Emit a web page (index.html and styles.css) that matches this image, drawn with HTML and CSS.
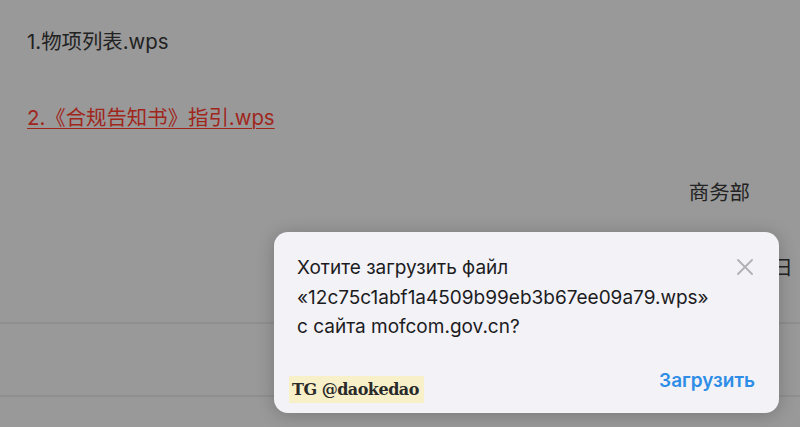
FILE: index.html
```html
<!DOCTYPE html>
<html lang="zh">
<head>
  <meta charset="UTF-8">
  <title>商务部</title>
  <meta name="viewport" content="width=device-width, initial-scale=1">
  <link rel="stylesheet" href="styles.css">
</head>
<body>
  <div class="page">
    <p class="file">1.物项列表.wps</p>
    <p class="file"><a href="#" class="link">2.《合规告知书》指引.wps</a></p>
    <p class="sign">商务部</p>
    <p class="date">日</p>
    <div class="rule first"></div>
    <div class="rule second"></div>
  </div>

  <div class="dialog">
    <div class="dialog-text">
      Хотите загрузить файл<br>
      «12c75c1abf1a4509b99eb3b67ee09a79.wps»<br>
      с сайта mofcom.gov.cn?
    </div>
    <svg class="close" width="16" height="16" viewBox="0 0 16 16">
      <path d="M1 1 L15 15 M15 1 L1 15" stroke="#b0b0b5" stroke-width="1.8" stroke-linecap="round"/>
    </svg>
    <div class="dialog-foot">
      <span class="mark">TG @daokedao</span>
      <a href="#" class="download">Загрузить</a>
    </div>
  </div>
</body>
</html>
```

FILE: styles.css
```css
body {
  margin: 0;
  background: #999999;
  font-family: "Inter", "Noto Sans CJK SC", sans-serif;
  color: #222;
  overflow: hidden;
}

.page {
  height: 427px;
  padding: 0 27px;
  position: relative;
}

.file {
  margin: 0;
  font-size: 20.4px;
  line-height: 26px;
}

.file:first-child {
  padding-top: 29px;
}

.file + .file {
  margin-top: 50px;
}

.link {
  color: #a0261c;
  text-decoration: underline;
  text-decoration-thickness: 1px;
  text-underline-offset: 3px;
}

.sign {
  margin: 49px 23px 0 0;
  font-size: 20.4px;
  line-height: 26px;
  text-align: right;
}

.date {
  margin: 49px -20px 0 0;
  font-size: 20.4px;
  line-height: 26px;
  text-align: right;
}

.rule {
  height: 2px;
  background: #8f8f8f;
  margin: 0 -27px;
}

.rule.first {
  margin-top: 41px;
}

.rule.second {
  margin-top: 71px;
}

.dialog {
  position: absolute;
  left: 274px;
  top: 232px;
  width: 505px;
  height: 181px;
  box-sizing: border-box;
  background: #f2f2f7;
  border-radius: 14px;
  box-shadow: 0 2px 18px rgba(0, 0, 0, 0.22);
  padding: 21px 24px 0 23px;
}

.dialog-text {
  font-size: 19px;
  line-height: 29.5px;
  color: #1c1c1e;
}

.close {
  position: absolute;
  top: 27px;
  right: 26px;
}

.dialog-foot {
  display: flex;
  justify-content: space-between;
  align-items: flex-start;
  margin-top: 27px;
}

.mark {
  margin: 7px 0 0 -8px;
  padding: 2px 5px 1px 3px;
  background: #f8f0c8;
  font-family: "DejaVu Serif", serif;
  font-weight: bold;
  font-size: 16px;
  line-height: 24px;
  color: #2a2a2a;
  letter-spacing: -0.5px;
}

.download {
  color: #2e8de6;
  font-size: 19px;
  font-weight: 600;
  line-height: 24px;
  text-decoration: none;
}
```
